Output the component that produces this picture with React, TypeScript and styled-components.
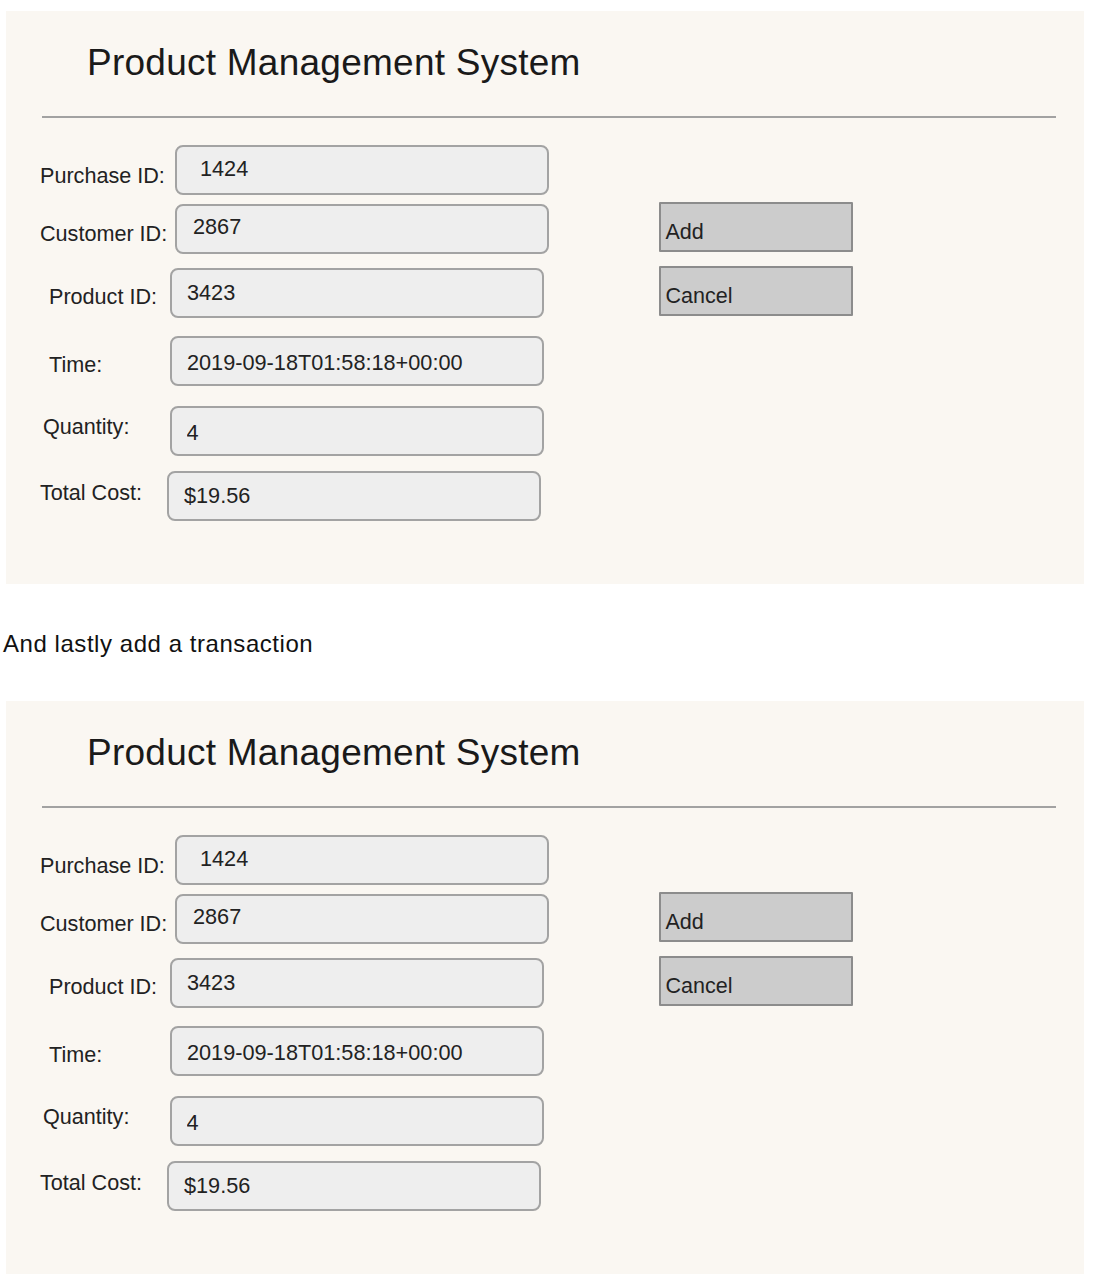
import React from "react";
import styled, { createGlobalStyle } from "styled-components";

const GlobalStyle = createGlobalStyle`
  html, body {
    margin: 0;
    padding: 0;
    background: #ffffff;
  }
  body {
    font-family: "Liberation Sans", Arial, Helvetica, sans-serif;
    color: #1f1f1f;
  }
`;

const Page = styled.div`
  width: 1100px;
  box-sizing: border-box;
  padding: 11px 0 15px 3px;
  display: flex;
  flex-direction: column;
`;

const Panel = styled.section`
  width: 1078px;
  margin-left: 3px;
  box-sizing: border-box;
  background: #faf7f2;
  padding: 30px 0 63px 0;
  display: flex;
  flex-direction: column;
`;

const Title = styled.h1`
  margin: 0 0 1px 81px;
  font-family: "Liberation Sans", Arial, Helvetica, sans-serif;
  font-weight: 400;
  font-size: 37px;
  letter-spacing: 0.25px;
  line-height: 44px;
  color: #1a1a1a;
`;

const Divider = styled.hr`
  margin: 30px 28px 0 36px;
  height: 2px;
  border: none;
  background: #a2a2a2;
`;

const Body = styled.div`
  margin-top: 27px;
  display: flex;
  align-items: flex-start;
`;

const FormColumn = styled.div`
  width: 543px;
  display: flex;
  flex-direction: column;
`;

const Row = styled.div<{ $gap: number }>`
  display: flex;
  align-items: center;
  height: 50px;
  margin-top: ${(p) => p.$gap}px;
`;

const Label = styled.label<{ $x: number; $w: number; $shift: number }>`
  margin-left: ${(p) => p.$x}px;
  width: ${(p) => p.$w}px;
  flex: 0 0 auto;
  box-sizing: border-box;
  padding-top: ${(p) => Math.max(0, p.$shift * 2)}px;
  padding-bottom: ${(p) => Math.max(0, -p.$shift * 2)}px;
  font-size: 21.6px;
  line-height: 26px;
  color: #222;
  white-space: nowrap;
`;

const Field = styled.input<{ $pad: number; $shift: number }>`
  width: 374px;
  height: 50px;
  box-sizing: border-box;
  border: 2px solid #a3a3a3;
  border-radius: 8px;
  background: #eeeeee;
  padding: ${(p) => Math.max(0, p.$shift * 2)}px 8px
    ${(p) => Math.max(0, -p.$shift * 2)}px ${(p) => p.$pad}px;
  font-family: "Liberation Sans", Arial, Helvetica, sans-serif;
  font-size: 21.7px;
  color: #222;
  outline: none;
`;

const ButtonColumn = styled.div`
  margin-left: 110px;
  margin-top: 57px;
  display: flex;
  flex-direction: column;
  gap: 14px;
`;

const ActionButton = styled.button`
  width: 194px;
  height: 50px;
  box-sizing: border-box;
  border: 2px solid #8c8c8c;
  border-radius: 1px;
  background: #cccccc;
  padding: 10px 0 0 4.5px;
  display: flex;
  align-items: center;
  justify-content: flex-start;
  font-family: "Liberation Sans", Arial, Helvetica, sans-serif;
  font-size: 21.5px;
  color: #222;
  cursor: pointer;
`;

const Caption = styled.p`
  margin: 46px 0 43px 0;
  font-size: 24px;
  letter-spacing: 0.55px;
  line-height: 28px;
  color: #111;
`;

type FieldRow = {
  label: string;
  value: string;
  labelX: number;
  inputX: number;
  gap: number;
  labelShift: number;
  textShift: number;
  pad: number;
};

const rows: FieldRow[] = [
  { label: "Purchase ID:", value: "1424", labelX: 34, inputX: 169, gap: 0, labelShift: 5.5, textShift: -1, pad: 23 },
  { label: "Customer ID:", value: "2867", labelX: 34, inputX: 169, gap: 9, labelShift: 4.7, textShift: -2, pad: 16 },
  { label: "Product ID:", value: "3423", labelX: 43, inputX: 164, gap: 14, labelShift: 3.5, textShift: -0.5, pad: 15 },
  { label: "Time:", value: "2019-09-18T01:58:18+00:00", labelX: 43, inputX: 164, gap: 18, labelShift: 3.8, textShift: 1.5, pad: 15 },
  { label: "Quantity:", value: "4", labelX: 37, inputX: 164, gap: 20, labelShift: -3.8, textShift: 2, pad: 14.5 },
  { label: "Total Cost:", value: "$19.56", labelX: 34, inputX: 161, gap: 15, labelShift: -3.5, textShift: 0, pad: 15 },
];

function ProductPanel({ id }: { id: string }) {
  return (
    <Panel>
      <Title>Product Management System</Title>
      <Divider />
      <Body>
        <FormColumn>
          {rows.map((r) => (
            <Row key={r.label} $gap={r.gap}>
              <Label
                htmlFor={`${id}-${r.label}`}
                $x={r.labelX}
                $w={r.inputX - r.labelX}
                $shift={r.labelShift}
              >
                {r.label}
              </Label>
              <Field
                id={`${id}-${r.label}`}
                readOnly
                value={r.value}
                $pad={r.pad}
                $shift={r.textShift}
              />
            </Row>
          ))}
        </FormColumn>
        <ButtonColumn>
          <ActionButton type="button">Add</ActionButton>
          <ActionButton type="button">Cancel</ActionButton>
        </ButtonColumn>
      </Body>
    </Panel>
  );
}

export default function App() {
  return (
    <>
      <GlobalStyle />
      <Page>
        <ProductPanel id="a" />
        <Caption>And lastly add a transaction</Caption>
        <ProductPanel id="b" />
      </Page>
    </>
  );
}
